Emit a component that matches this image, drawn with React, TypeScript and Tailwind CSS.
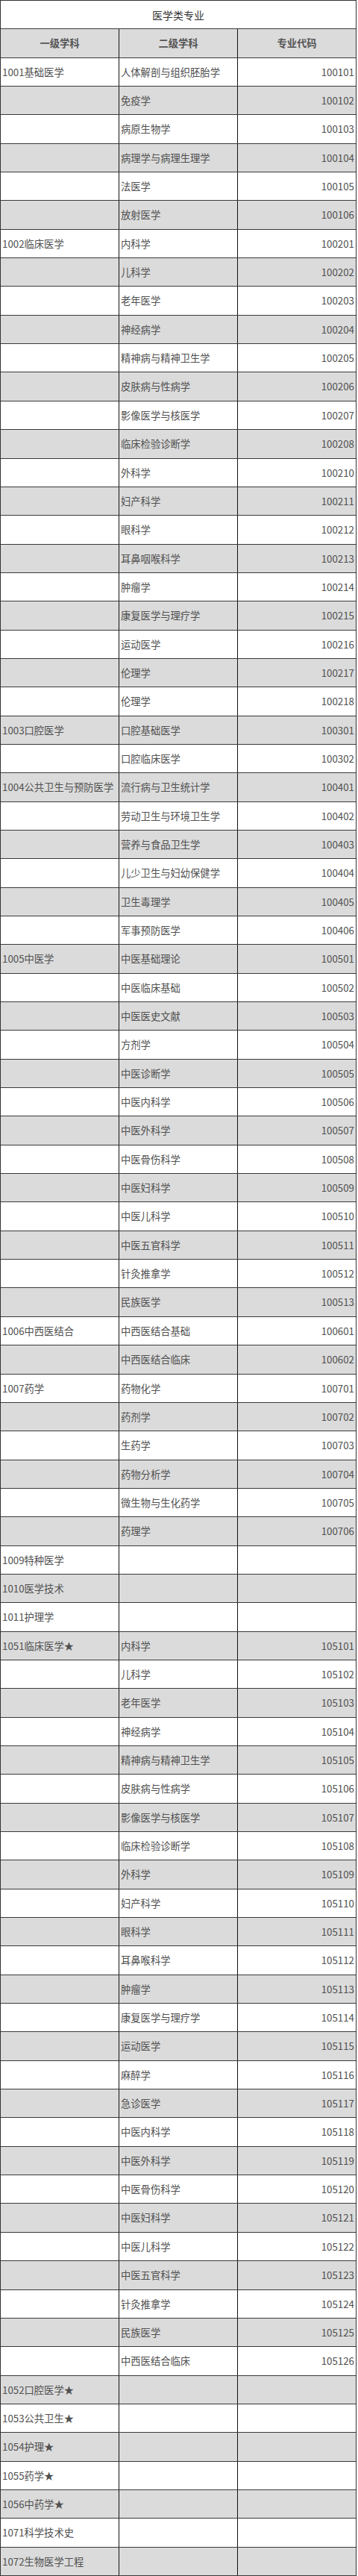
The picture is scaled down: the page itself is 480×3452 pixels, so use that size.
import React from "react";

type Row = [string, string, string];

const rows: Row[] = [
  ["1001基础医学", "人体解剖与组织胚胎学", "100101"],
  ["", "免疫学", "100102"],
  ["", "病原生物学", "100103"],
  ["", "病理学与病理生理学", "100104"],
  ["", "法医学", "100105"],
  ["", "放射医学", "100106"],
  ["1002临床医学", "内科学", "100201"],
  ["", "儿科学", "100202"],
  ["", "老年医学", "100203"],
  ["", "神经病学", "100204"],
  ["", "精神病与精神卫生学", "100205"],
  ["", "皮肤病与性病学", "100206"],
  ["", "影像医学与核医学", "100207"],
  ["", "临床检验诊断学", "100208"],
  ["", "外科学", "100210"],
  ["", "妇产科学", "100211"],
  ["", "眼科学", "100212"],
  ["", "耳鼻咽喉科学", "100213"],
  ["", "肿瘤学", "100214"],
  ["", "康复医学与理疗学", "100215"],
  ["", "运动医学", "100216"],
  ["", "伦理学", "100217"],
  ["", "伦理学", "100218"],
  ["1003口腔医学", "口腔基础医学", "100301"],
  ["", "口腔临床医学", "100302"],
  ["1004公共卫生与预防医学", "流行病与卫生统计学", "100401"],
  ["", "劳动卫生与环境卫生学", "100402"],
  ["", "营养与食品卫生学", "100403"],
  ["", "儿少卫生与妇幼保健学", "100404"],
  ["", "卫生毒理学", "100405"],
  ["", "军事预防医学", "100406"],
  ["1005中医学", "中医基础理论", "100501"],
  ["", "中医临床基础", "100502"],
  ["", "中医医史文献", "100503"],
  ["", "方剂学", "100504"],
  ["", "中医诊断学", "100505"],
  ["", "中医内科学", "100506"],
  ["", "中医外科学", "100507"],
  ["", "中医骨伤科学", "100508"],
  ["", "中医妇科学", "100509"],
  ["", "中医儿科学", "100510"],
  ["", "中医五官科学", "100511"],
  ["", "针灸推拿学", "100512"],
  ["", "民族医学", "100513"],
  ["1006中西医结合", "中西医结合基础", "100601"],
  ["", "中西医结合临床", "100602"],
  ["1007药学", "药物化学", "100701"],
  ["", "药剂学", "100702"],
  ["", "生药学", "100703"],
  ["", "药物分析学", "100704"],
  ["", "微生物与生化药学", "100705"],
  ["", "药理学", "100706"],
  ["1009特种医学", "", ""],
  ["1010医学技术", "", ""],
  ["1011护理学", "", ""],
  ["1051临床医学★", "内科学", "105101"],
  ["", "儿科学", "105102"],
  ["", "老年医学", "105103"],
  ["", "神经病学", "105104"],
  ["", "精神病与精神卫生学", "105105"],
  ["", "皮肤病与性病学", "105106"],
  ["", "影像医学与核医学", "105107"],
  ["", "临床检验诊断学", "105108"],
  ["", "外科学", "105109"],
  ["", "妇产科学", "105110"],
  ["", "眼科学", "105111"],
  ["", "耳鼻喉科学", "105112"],
  ["", "肿瘤学", "105113"],
  ["", "康复医学与理疗学", "105114"],
  ["", "运动医学", "105115"],
  ["", "麻醉学", "105116"],
  ["", "急诊医学", "105117"],
  ["", "中医内科学", "105118"],
  ["", "中医外科学", "105119"],
  ["", "中医骨伤科学", "105120"],
  ["", "中医妇科学", "105121"],
  ["", "中医儿科学", "105122"],
  ["", "中医五官科学", "105123"],
  ["", "针灸推拿学", "105124"],
  ["", "民族医学", "105125"],
  ["", "中西医结合临床", "105126"],
  ["1052口腔医学★", "", ""],
  ["1053公共卫生★", "", ""],
  ["1054护理★", "", ""],
  ["1055药学★", "", ""],
  ["1056中药学★", "", ""],
  ["1071科学技术史", "", ""],
  ["1072生物医学工程", "", ""],
];

const font = {
  fontFamily: '"Noto Sans CJK SC", "Liberation Sans", sans-serif',
};

export default function App() {
  return (
    <div className="w-[480px] h-[3452px] bg-white" style={font}>
      <div className="w-[478px] h-[3452px] flex flex-col border-l border-t border-r border-[#333333] text-[13.3px] text-[#505050] leading-none">
        <div className="flex-1 min-h-0 flex items-center justify-center border-b border-[#3a3a3a] bg-white text-[14px] text-[#333333]">
          医学类专业
        </div>
        <div className="flex-1 min-h-0 grid grid-cols-[159px_159px_1fr] border-b border-[#3a3a3a] bg-[#dbdbdb] font-bold text-[#555555]">
          <div className="flex items-center justify-center border-r border-[#111111]">一级学科</div>
          <div className="flex items-center justify-center border-r border-[#111111]">二级学科</div>
          <div className="flex items-center justify-center">专业代码</div>
        </div>
        {rows.map((r, i) => (
          <div
            key={i}
            className={
              "flex-1 min-h-0 grid grid-cols-[159px_159px_1fr] border-b border-[#3a3a3a] " +
              (i % 2 === 1 ? "bg-[#dbdbdb]" : "bg-white")
            }
          >
            <div className="flex items-center pl-[2px] whitespace-nowrap overflow-hidden border-r border-[#111111]">
              {r[0]}
            </div>
            <div className="flex items-center pl-[2px] whitespace-nowrap overflow-hidden border-r border-[#111111]">
              {r[1]}
            </div>
            <div className="flex items-center justify-end pr-[2px] whitespace-nowrap">
              {r[2]}
            </div>
          </div>
        ))}
      </div>
    </div>
  );
}
